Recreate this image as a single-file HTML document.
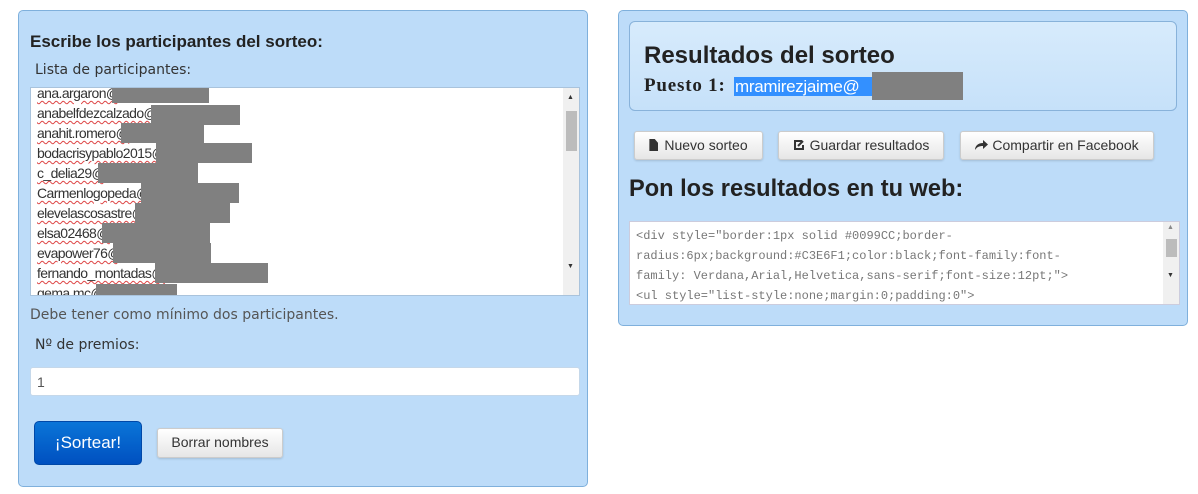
<!DOCTYPE html>
<html><head><meta charset="utf-8"><style>
*{box-sizing:border-box;margin:0;padding:0}
body{width:1198px;height:494px;background:#fff;position:relative;overflow:hidden;font-family:"Liberation Sans",sans-serif}
.a{position:absolute}
.panel{background:#bddcf9;border:1px solid #7fb0dc;border-radius:5px}
.h{font-family:"Liberation Sans",sans-serif;font-weight:bold;color:#222;white-space:nowrap}
.ta{background:#fff;border:1px solid #a9c3dc;overflow:hidden}
.ln{position:absolute;left:6px;font-size:14px;letter-spacing:-0.6px;color:#333;white-space:nowrap;text-decoration:underline wavy #d44;text-decoration-thickness:1px;text-underline-offset:2px;height:20px;line-height:20px}
.g{position:absolute;background:#808080;height:20px}
.btn{position:absolute;background:linear-gradient(#fff,#e6e6e6);border:1px solid #ccc;border-radius:3px;box-shadow:0 1px 2px rgba(0,0,0,.15);font-size:14px;color:#333;text-align:center;line-height:27px;white-space:nowrap}
.sb{position:absolute;right:0;top:0;width:16px;height:100%;background:#f0f0f0}
.code{position:absolute;left:6px;font-family:"Liberation Mono",monospace;font-size:12px;color:#777;white-space:nowrap;line-height:20px}
</style></head><body>
<div class="a panel" style="left:18px;top:10px;width:570px;height:477px"></div>
<div class="a h" style="left:30px;top:32px;font-size:17px">Escribe los participantes del sorteo:</div>
<div class="a" style="left:35px;top:62px;font-size:14px;color:#333;font-family:'DejaVu Sans',sans-serif">Lista de participantes:</div>
<div class="a ta" style="left:30px;top:87px;width:550px;height:209px">
<div class="ln" style="top:-5px">ana.argaron@</div><div class="g" style="left:81px;top:-5px;width:97px"></div>
<div class="ln" style="top:15px">anabelfdezcalzado@</div><div class="g" style="left:120px;top:17px;width:89px"></div>
<div class="ln" style="top:35px">anahit.romero@</div><div class="g" style="left:90px;top:35px;width:83px"></div>
<div class="ln" style="top:55px">bodacrisypablo2015@</div><div class="g" style="left:125px;top:55px;width:96px"></div>
<div class="ln" style="top:75px">c_delia29@</div><div class="g" style="left:67px;top:75px;width:100px"></div>
<div class="ln" style="top:95px">Carmenlogopeda@</div><div class="g" style="left:110px;top:95px;width:98px"></div>
<div class="ln" style="top:115px">elevelascosastre@</div><div class="g" style="left:104px;top:115px;width:95px"></div>
<div class="ln" style="top:135px">elsa02468@</div><div class="g" style="left:71px;top:135px;width:108px"></div>
<div class="ln" style="top:155px">evapower76@</div><div class="g" style="left:82px;top:155px;width:98px"></div>
<div class="ln" style="top:175px">fernando_montadas@</div><div class="g" style="left:124px;top:175px;width:113px"></div>
<div class="ln" style="top:195px">gema.mc@</div><div class="g" style="left:65px;top:196px;width:81px"></div>
<div class="sb"><div style="position:absolute;left:3px;top:23px;width:11px;height:40px;background:#bcbcbc"></div>
<div style="position:absolute;left:4px;top:6px;font-size:7px;color:#333">▲</div>
<div style="position:absolute;left:4px;top:175px;font-size:7px;color:#333">▼</div></div>
</div>
<div class="a" style="left:30px;top:307px;font-size:14px;color:#555;font-family:'DejaVu Sans',sans-serif">Debe tener como mínimo dos participantes.</div>
<div class="a" style="left:35px;top:337px;font-size:14px;color:#333;font-family:'DejaVu Sans',sans-serif">Nº de premios:</div>
<div class="a" style="left:30px;top:367px;width:550px;height:29px;background:#fff;border:1px solid #c5d8ea;border-radius:3px;font-size:14px;color:#555;padding:6px 6px;line-height:16px">1</div>
<div class="a" style="left:34px;top:421px;width:108px;height:44px;background:linear-gradient(#0a75d8,#0050c0);border-radius:5px;border:1px solid #0048a8;color:#fff;font-size:17px;text-align:center;line-height:42px">¡Sortear!</div>
<div class="btn" style="left:157px;top:428px;width:126px;height:30px;font-size:14px">Borrar nombres</div>

<div class="a panel" style="left:618px;top:10px;width:570px;height:316px"></div>
<div class="a" style="left:629px;top:21px;width:548px;height:90px;border:1px solid #88b2da;border-radius:6px;background:linear-gradient(#d7ebfc,#c6e1f9)"></div>
<div class="a h" style="left:644px;top:42px;font-size:24px">Resultados del sorteo</div>
<div class="a" style="left:644px;top:75px;font-family:'Liberation Serif',serif;font-weight:bold;font-size:19px;letter-spacing:0.8px;color:#222;white-space:nowrap">Puesto 1:</div>
<div class="a" style="left:734px;top:77px;width:138px;height:19px;background:#3390ff;color:#fff;font-size:17px;line-height:19px;padding-left:1px;letter-spacing:-0.3px">mramirezjaime@</div>
<div class="a" style="left:872px;top:72px;width:91px;height:28px;background:#808080"></div>
<div class="btn" style="left:634px;top:131px;width:129px;height:29px"><span style="display:inline-block;width:9px;height:12px;background:#333;vertical-align:-1px;margin-right:6px;clip-path:polygon(0 0,60% 0,100% 35%,100% 100%,0 100%)"></span>Nuevo sorteo</div>
<div class="btn" style="left:778px;top:131px;width:166px;height:29px"><svg width="12" height="12" viewBox="0 0 12 12" style="vertical-align:-1px;margin-right:5px"><path d="M9 2H2v8h8V6" fill="none" stroke="#333" stroke-width="2"/><path d="M5 7l5-5" stroke="#333" stroke-width="2"/></svg>Guardar resultados</div>
<div class="btn" style="left:960px;top:131px;width:194px;height:29px"><svg width="13" height="11" viewBox="0 0 13 11" style="vertical-align:-1px;margin-right:4px"><path d="M8 0l5 4.5L8 9V6C4 6 2 7 0 10 0 6 3 3 8 3z" fill="#333"/></svg>Compartir en Facebook</div>
<div class="a h" style="left:629px;top:176px;font-size:23.6px">Pon los resultados en tu web:</div>
<div class="a ta" style="left:629px;top:221px;width:551px;height:84px;border-color:#ccd">
<div class="code" style="top:4px">&lt;div style="border:1px solid #0099CC;border-</div>
<div class="code" style="top:24px">radius:6px;background:#C3E6F1;color:black;font-family:font-</div>
<div class="code" style="top:44px">family: Verdana,Arial,Helvetica,sans-serif;font-size:12pt;"&gt;</div>
<div class="code" style="top:64px">&lt;ul style="list-style:none;margin:0;padding:0"&gt;</div>
<div class="sb"><div style="position:absolute;left:3px;top:17px;width:11px;height:18px;background:#bcbcbc"></div>
<div style="position:absolute;left:4px;top:2px;font-size:7px;color:#888">▲</div>
<div style="position:absolute;left:4px;top:50px;font-size:7px;color:#333">▼</div></div>
</div>
</body></html>
